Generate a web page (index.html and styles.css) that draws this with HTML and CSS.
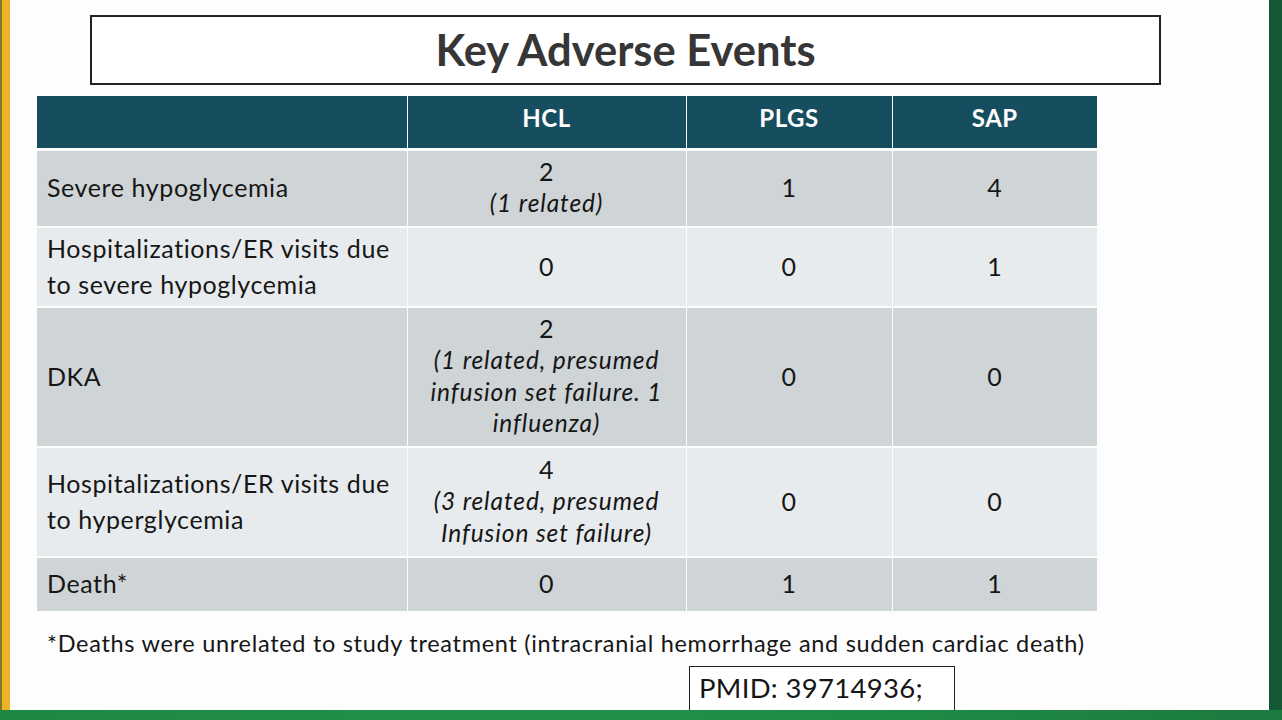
FILE: index.html
```html
<!DOCTYPE html>
<html lang="en">
<head>
<meta charset="utf-8">
<title>Key Adverse Events</title>
<link rel="stylesheet" href="styles.css">
</head>
<body>
<div class="frame">
  <div class="stage">
    <div class="edge-left"></div>
    <main class="slide">
      <h1 class="title">Key Adverse Events</h1>
      <table class="events">
        <colgroup>
          <col class="c-label">
          <col class="c-hcl">
          <col class="c-plgs">
          <col class="c-sap">
        </colgroup>
        <thead>
          <tr class="head">
            <th></th>
            <th>HCL</th>
            <th>PLGS</th>
            <th>SAP</th>
          </tr>
        </thead>
        <tbody>
          <tr class="r1 odd">
            <td class="label">Severe hypoglycemia</td>
            <td><div class="num">2</div><div class="note">(1 related)</div></td>
            <td>1</td>
            <td>4</td>
          </tr>
          <tr class="r2 even">
            <td class="label">Hospitalizations/ER visits due to severe hypoglycemia</td>
            <td>0</td>
            <td>0</td>
            <td>1</td>
          </tr>
          <tr class="r3 odd">
            <td class="label">DKA</td>
            <td><div class="num">2</div><div class="note">(1 related, presumed infusion set failure. 1 influenza)</div></td>
            <td>0</td>
            <td>0</td>
          </tr>
          <tr class="r4 even">
            <td class="label">Hospitalizations/ER visits due to hyperglycemia</td>
            <td><div class="num">4</div><div class="note">(3 related, presumed Infusion set failure)</div></td>
            <td>0</td>
            <td>0</td>
          </tr>
          <tr class="r5 odd">
            <td class="label">Death*</td>
            <td>0</td>
            <td>1</td>
            <td>1</td>
          </tr>
        </tbody>
      </table>
      <p class="footnote">*Deaths were unrelated to study treatment (intracranial hemorrhage and sudden cardiac death)</p>
      <div class="pmid">PMID: 39714936;</div>
    </main>
    <div class="edge-right"></div>
  </div>
  <div class="edge-bottom"></div>
</div>
</body>
</html>
```

FILE: styles.css
```css
* { box-sizing: border-box; }
html, body {
  margin: 0;
  padding: 0;
  width: 1282px;
  height: 720px;
  overflow: hidden;
  background: #fdfdfd;
  font-family: "Lato", "Open Sans", sans-serif;
  color: #161616;
}
.frame {
  display: flex;
  flex-direction: column;
  width: 1282px;
  height: 720px;
}
.stage {
  display: flex;
  height: 710px;
}
.edge-left {
  width: 10px;
  flex: none;
  background: #ebb428;
  border-left: 2px solid #7c7a25;
}
.edge-right {
  width: 13px;
  flex: none;
  background: #155836;
}
.edge-bottom {
  height: 10px;
  background: linear-gradient(90deg, #1f8744 0%, #22904a 40%, #1f8a46 70%, #1c7a40 100%);
}
.slide {
  flex: 1;
  overflow: hidden;
  padding: 15px 0 0 27px;
  background: #fdfdfd;
}
.title {
  margin: 0 0 0 53px;
  width: 1071px;
  height: 70px;
  border: 2px solid #222;
  background: #fff;
  text-align: center;
  font-size: 43.5px;
  font-weight: 700;
  line-height: 64px;
  color: #363636;
}
.events {
  margin-top: 11px;
  width: 1060px;
  border-collapse: collapse;
  table-layout: fixed;
  font-size: 25px;
  letter-spacing: 0.6px;
}
.c-label { width: 370px; }
.c-hcl { width: 279px; }
.c-plgs { width: 206px; }
.c-sap { width: 205px; }
.events th,
.events td {
  padding: 0 0 3px;
  text-align: center;
  vertical-align: middle;
  border-right: 1.5px solid #fbfcfc;
  border-bottom: 2px solid #fbfcfc;
}
.events th:last-child,
.events td:last-child { border-right: none; }
.head th {
  background: #174e5f;
  color: #fff;
  font-weight: 700;
  font-size: 24px;
  letter-spacing: 0.5px;
  height: 53px;
  border-bottom-width: 3px;
  padding-bottom: 9px;
}
.odd td { background: #cfd4d7; }
.even td { background: #e7ebed; }
.events td.label {
  text-align: left;
  padding: 0 8px 3px 10px;
  line-height: 36px;
}
.num { line-height: 32px; }
.note {
  font-style: italic;
  font-size: 24.5px;
  letter-spacing: 0.9px;
  line-height: 31.5px;
  padding: 0 8px;
}
.r1 td { height: 78px; }
.r2 td { height: 80px; }
.r3 td { height: 140px; }
.r4 td { height: 110px; }
.r5 td { height: 55px; }
.footnote {
  margin: 15px 0 0 10px;
  font-size: 23.5px;
  letter-spacing: 0.7px;
  line-height: 30px;
  white-space: nowrap;
}
.pmid {
  margin: 8px 0 0 652px;
  width: 266px;
  height: 60px;
  border: 1.5px solid #222;
  padding: 5px 0 0 9px;
  font-size: 27.5px;
  letter-spacing: 0.3px;
  line-height: 32px;
  background: #fff;
}
```
